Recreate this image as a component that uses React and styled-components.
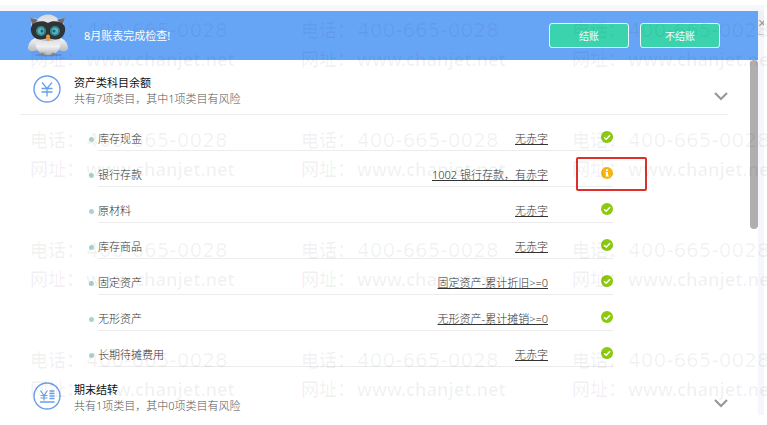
import { useState } from "react";
import styled, { createGlobalStyle } from "styled-components";

const GlobalStyle = createGlobalStyle`
* {
    box-sizing: border-box;
}
body {
    margin: 0;
    background-color: #fff;
    font-family: "Noto Sans", "Noto Sans CJK SC", sans-serif;
    font-size: 11px;
    font-weight: 300;
    line-height: 16px;
    color: #333;
}
`
const Page = styled.div`
position: relative;
min-height: 100vh;
padding: 5px 3px 10px 0;
overflow: hidden;
`
const Frame = styled.div`
display: flex;
align-items: flex-start;
padding-top: 6px;
background-color: #f5f7fb;
`
const Dialog = styled.main`
flex: 1;
min-width: 0;
background-color: #fff;
`
const CloseTab = styled.button`
width: 6px;
height: 24px;
padding: 0;
overflow: hidden;
border: 0;
border-bottom: 1px solid #c9ccd2;
background-color: #eef0f4;
color: #999;
font-size: 14px;
line-height: 22px;
`
const Header = styled.header`
display: flex;
align-items: center;
height: 49px;
padding: 0 38px 0 27px;
background-color: #66a5f6;
color: #fff;
`
const Title = styled.h1`
flex: 1;
margin: 0 0 0 15px;
font-size: 11px;
font-weight: 400;
`
const Actions = styled.div`
display: flex;
gap: 11px;
`
const ActionButton = styled.button`
width: 80px;
height: 25px;
padding: 0;
border: 1px solid #e8fbf6;
border-radius: 3px;
background-color: #3bd3ae;
color: #fff;
font-family: inherit;
font-size: 10px;
`
const Body = styled.div`
display: flex;
align-items: flex-start;
`
const Content = styled.div`
flex: 1;
min-width: 0;
`
const ScrollThumb = styled.div`
width: 8px;
height: 169px;
border-radius: 4px;
background-color: #b0aeae;
`
const SectionHeader = styled.div`
display: flex;
align-items: flex-start;
height: ${props => props.$line ? "55px" : "48px"};
margin: 0 22px 0 20px;
padding: 15px 0 0 13px;
border-bottom: ${props => props.$line ? "1px solid #ececec" : "0"};
`
const SectionText = styled.div`
flex: 1;
margin-left: 13px;
`
const SectionTitle = styled.h2`
margin: 0;
font-size: 11px;
font-weight: 400;
color: #111;
`
const SectionNote = styled.p`
margin: 0;
color: #555;
`
const Toggle = styled.button`
display: flex;
margin-top: 16px;
padding: 0;
border: 0;
background: none;
`
const List = styled.ul`
margin: 0;
padding: 0 137px 0 89px;
list-style: none;
`
const Item = styled.li`
display: flex;
gap: 4px;
`
const Dot = styled.span`
width: 5px;
height: 5px;
margin-top: 22px;
border-radius: 50%;
background-color: #a5d3d6;
`
const ItemLine = styled.div`
position: relative;
flex: 1;
display: flex;
align-items: flex-start;
padding: 16px 0 3px;
border-bottom: 1px solid #ececec;
`
const ItemName = styled.span`
flex: 1;
`
const Result = styled.a`
margin-right: 53px;
color: #333;
text-decoration: underline;
`
const Highlight = styled.div`
position: absolute;
top: 6px;
right: -34px;
width: 71px;
height: 34px;
border: 2px solid #de2f2a;
border-radius: 2px;
`
const Watermark = styled.div`
position: absolute;
inset: 0;
display: grid;
grid-template-columns: repeat(3, 271px);
grid-auto-rows: 110px;
padding: 16px 0 0 30px;
color: rgba(20, 20, 40, 0.06);
font-size: 18px;
font-weight: 500;
line-height: 29px;
pointer-events: none;
`
const MarkLine = styled.div`
display: flex;
height: 29px;
`
const MarkLabel = styled.span`
width: 56px;
`
const MarkValue = styled.span`
font-family: ${props => props.$wide ? '"DejaVu Sans"' : '"Noto Sans"'}, sans-serif;
font-size: ${props => props.$wide ? "20px" : "18px"};
font-weight: ${props => props.$wide ? 500 : 600};
`

const Owl = () => {
    return (
        <svg width="42" height="43" viewBox="0 0 42 43" aria-hidden="true">
            <defs>
                <linearGradient id="feather" x1="0" y1="0" x2="0" y2="1">
                    <stop offset="0" stopColor="#d9dadc" />
                    <stop offset="0.5" stopColor="#f1f1f2" />
                    <stop offset="1" stopColor="#b4b5b9" />
                </linearGradient>
                <linearGradient id="wing" x1="0" y1="0" x2="0" y2="1">
                    <stop offset="0" stopColor="#f7f7f8" />
                    <stop offset="1" stopColor="#b9bbc0" />
                </linearGradient>
            </defs>
            <ellipse cx="21" cy="41" rx="14" ry="1.500" fill="#4b78b5" opacity="0.5" />
            <path d="M9 24C4 25 1 30 1 34c0 4 7 4 11 1z" fill="url(#wing)" />
            <path d="M33 24c5 1 8 6 8 10 0 4-7 4-11 1z" fill="url(#wing)" />
            <path d="M9 24c-2 8 1 17 12 17s14-9 12-17z" fill="url(#feather)" />
            <path d="M3 4c4 0 6 1 8 1 5-6 15-6 20 0 2 0 4-1 7-1-2 4-1 7-1 10 0 8-6 13-16 13S4 22 4 14c0-3 1-6-1-10z" fill="url(#feather)" />
            <path d="M3 4c3 0 6 1 8 2l-6 6C5 9 4 7 3 4zM38 4c-3 0-6 1-8 2l6 6c0-3 1-5 2-8z" fill="#696d73" />
            <path d="M21 9C17 6 8 7 5 11c-3 5 0 12 5 14 4 1 7 0 11-1 4 1 7 2 11 1 5-2 8-9 5-14-3-4-12-5-16-2z" fill="#313437" />
            <circle cx="14" cy="17" r="5" fill="#358b92" />
            <circle cx="28" cy="17" r="5" fill="#358b92" />
            <circle cx="14" cy="17" r="3.200" fill="#58bbc1" />
            <circle cx="28" cy="17" r="3.200" fill="#58bbc1" />
            <circle cx="15" cy="17" r="1.500" fill="#1d646b" />
            <circle cx="27" cy="17" r="1.500" fill="#1d646b" />
            <path d="M19 22c1-2 3-2 4 0 0 2-1 4-2 6-1-2-2-4-2-6z" fill="#f19a35" />
            <path d="M13 41c1-3 4-3 5 0zM24 41c1-3 4-3 5 0z" fill="#85878c" />
        </svg>
    )
}

const YuanIcon = ({ detail }) => {
    return (
        <svg width="28" height="28" viewBox="0 0 28 28" fill="none" stroke="#6a9fea" aria-hidden="true">
            <circle cx="14" cy="14" r="13" strokeWidth="1.400" />
            {detail ? (
                <>
                    <path d="M7.500 8.500l3.500 5 3.500-5M11 13.500v5M7.500 13.500h7M7.500 16h7" strokeWidth="1.200" />
                    <path d="M16.500 9h5M16.500 11.500h5M16.500 14h5M16.500 16.500h5M7 20h14.500" strokeWidth="1.300" />
                </>
            ) : (
                <path d="M9 7.500l5 6 5-6M14 13.500v8M8.500 13.500h11M8.500 17h11" strokeWidth="1.300" />
            )}
        </svg>
    )
}

const Chevron = () => {
    return (
        <svg width="14" height="10" viewBox="0 0 14 10" fill="none" stroke="#999" strokeWidth="2.200" aria-hidden="true">
            <path d="M1 2l6 6 6-6" />
        </svg>
    )
}

const StatusIcon = ({ risk }) => {
    return (
        <svg width="12" height="12" viewBox="0 0 12 12" role="img" aria-label={risk ? "有风险" : "正常"}>
            <circle cx="6" cy="6" r="6" fill={risk ? "#f7b70f" : "#8cc90f"} />
            {risk ? (
                <path d="M5 2.500h2v1.500H5zM4.500 5H7v3.500h.8v1H4.300v-1H5V6h-.5z" fill="#fff" />
            ) : (
                <path d="M3 6.200l2.200 2.100L9 4.200" fill="none" stroke="#fff" strokeWidth="1.500" />
            )}
        </svg>
    )
}

const assets = [
    { name: "库存现金", result: "无赤字" },
    { name: "银行存款", result: "1002 银行存款，有赤字", risk: true },
    { name: "原材料", result: "无赤字" },
    { name: "库存商品", result: "无赤字" },
    { name: "固定资产", result: "固定资产-累计折旧>=0" },
    { name: "无形资产", result: "无形资产-累计摊销>=0" },
    { name: "长期待摊费用", result: "无赤字" },
]

const App = () => {
    const [open, setOpen] = useState(true)
    return (
        <Page>
            <GlobalStyle />
            <Frame>
                <Dialog>
                    <Header>
                        <Owl />
                        <Title>8月账表完成检查!</Title>
                        <Actions>
                            <ActionButton>结账</ActionButton>
                            <ActionButton>不结账</ActionButton>
                        </Actions>
                    </Header>
                    <Body>
                        <Content>
                            <SectionHeader $line>
                                <YuanIcon />
                                <SectionText>
                                    <SectionTitle>资产类科目余额</SectionTitle>
                                    <SectionNote>共有7项类目，其中1项类目有风险</SectionNote>
                                </SectionText>
                                <Toggle aria-label="资产类科目余额" aria-expanded={open} onClick={() => setOpen(!open)}>
                                    <Chevron />
                                </Toggle>
                            </SectionHeader>
                            {open && (
                                <List>
                                    {assets.map(item => (
                                        <Item key={item.name}>
                                            <Dot />
                                            <ItemLine>
                                                <ItemName>{item.name}</ItemName>
                                                <Result href="#">{item.result}</Result>
                                                <StatusIcon risk={item.risk} />
                                                {item.risk && <Highlight />}
                                            </ItemLine>
                                        </Item>
                                    ))}
                                </List>
                            )}
                            <SectionHeader>
                                <YuanIcon detail />
                                <SectionText>
                                    <SectionTitle>期末结转</SectionTitle>
                                    <SectionNote>共有1项类目，其中0项类目有风险</SectionNote>
                                </SectionText>
                                <Toggle aria-label="期末结转">
                                    <Chevron />
                                </Toggle>
                            </SectionHeader>
                        </Content>
                        <ScrollThumb />
                    </Body>
                </Dialog>
                <CloseTab aria-label="关闭">×</CloseTab>
            </Frame>
            <Watermark aria-hidden="true">
                {Array.from({ length: 12 }, (_, i) => (
                    <div key={i}>
                        <MarkLine>
                            <MarkLabel>电话：</MarkLabel>
                            <MarkValue $wide>400-665-0028</MarkValue>
                        </MarkLine>
                        <MarkLine>
                            <MarkLabel>网址：</MarkLabel>
                            <MarkValue>www.chanjet.net</MarkValue>
                        </MarkLine>
                    </div>
                ))}
            </Watermark>
        </Page>
    )
}

export default App;
